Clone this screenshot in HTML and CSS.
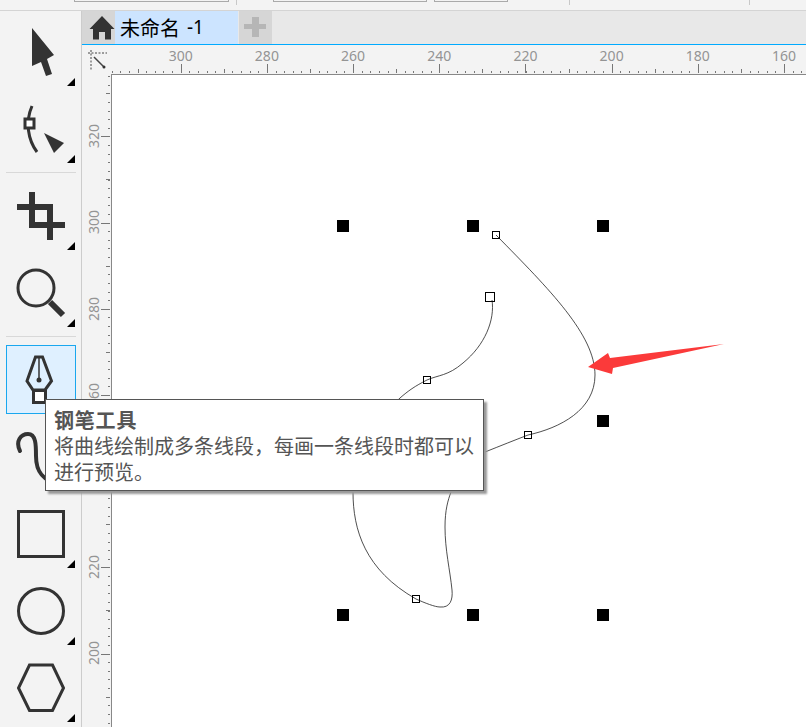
FILE: index.html
```html
<!DOCTYPE html>
<html lang="zh">
<head>
<meta charset="utf-8">
<title>未命名 -1</title>
<link rel="stylesheet" href="styles.css">
</head>
<body>
<div class="app">
  <div class="topbar">
    <span class="field f1"></span>
    <span class="sep s1"></span>
    <span class="field f2"></span>
    <span class="field f3"></span>
    <span class="sep s2"></span>
    <span class="sep s3"></span>
  </div>
  <div class="body">
    <div class="toolbox">
      <div class="tool more">
        <svg viewBox="6 16 70 70"><path class="fill" d="M32 28 54 55 47 59 52 74 46 76 41 62 32 66Z"/></svg>
      </div>
      <div class="tool more">
        <svg viewBox="6 93 70 70"><path class="line" d="M32 106C25 122 28 140 37 152"/><rect class="line whitefill" x="25" y="119" width="9" height="9"/><path class="fill" d="M44 133 64 143 54 153Z"/></svg>
      </div>
      <div class="rule"></div>
      <div class="tool more">
        <svg viewBox="6 180 70 70"><path class="line thick" d="M32 192V225H65M17 207H50V240"/></svg>
      </div>
      <div class="tool more">
        <svg viewBox="6 257 70 70"><circle class="line" cx="36" cy="288" r="18"/><path class="line thick" d="M50 302 63 315"/></svg>
      </div>
      <div class="rule"></div>
      <div class="tool active">
        <svg viewBox="6 345 70 69"><path class="line" d="M35.500 357H42.500L51.500 381 45 390H33L27 381Z"/><path class="line thin" d="M39 357V380"/><circle class="fill" cx="39" cy="380" r="2.500"/><rect class="line whitefill" x="33.500" y="390.500" width="12" height="12"/></svg>
      </div>
      <div class="tool">
        <svg viewBox="6 421 70 70"><path class="line curve" d="M20 451C15 441 21 434 28 434 36 434 36 445 36 456 36 471 42 481 60 484"/></svg>
      </div>
      <div class="tool more">
        <svg viewBox="6 498 70 70"><rect class="line" x="18.500" y="511.500" width="45" height="45"/></svg>
      </div>
      <div class="tool more">
        <svg viewBox="6 575 70 70"><circle class="line" cx="41" cy="611" r="22.500"/></svg>
      </div>
      <div class="tool more">
        <svg viewBox="6 652 70 70"><path class="line" d="M29.500 665H52.500L63.500 688 52.500 710.500H29.500L18.500 688Z"/></svg>
      </div>
    </div>
    <div class="workspace">
      <div class="tabs">
        <div class="tab-home">
          <svg viewBox="82 11 33 33"><path class="fill" d="M102 16 114.500 29H111V39.500H105V32H99V39.500H93V29H89.500Z"/></svg>
        </div>
        <div class="tab-doc"><span class="tab-name">未命名</span><span class="tab-num">-1</span></div>
        <div class="tab-add">
          <svg viewBox="239 11 33 33"><path class="plus" d="M244 24H252V17H259V24H266V29H259V37H252V29H244Z"/></svg>
        </div>
      </div>
      <div class="ruler-row">
        <div class="corner">
          <svg viewBox="82 45 29 29"><path class="dash" d="M88 53H107M91 50V70"/><path class="arrow" d="M94 57 104 67"/><circle class="fill" cx="104" cy="67" r="1.500"/></svg>
        </div>
        <div class="ruler-h">
          <span class="hcell">300</span><span class="hcell">280</span><span class="hcell">260</span><span class="hcell">240</span><span class="hcell">220</span><span class="hcell">200</span><span class="hcell">180</span><span class="hcell">160</span>
        </div>
      </div>
      <div class="stage">
        <div class="ruler-v">
          <span class="vcell"><span>320</span></span><span class="vcell"><span>300</span></span><span class="vcell"><span>280</span></span><span class="vcell"><span>260</span></span><span class="vcell"><span>240</span></span><span class="vcell"><span>220</span></span><span class="vcell"><span>200</span></span>
        </div>
        <div class="canvas">
          <svg viewBox="112 75 694 652">
            <path class="curve-line" d="M492 300C495 320 485 345 463 363 448 376 438 375 427 380 415 386 408 391 400 398 370 425 353 460 353 492 353 530 365 570 416 599 425 603 435 607 440 607 450 608 453 600 452 590 450 570 445 550 445 527 445 510 448 500 451 492 455 470 470 458 485 452 500 446 515 440 528 435 560 428 595 410 595 375 595 335 550 290 496 235"/>
            <g class="nodes">
              <rect x="337" y="220" width="12" height="12"/><rect x="467" y="220" width="12" height="12"/><rect x="597" y="220" width="12" height="12"/>
              <rect x="597" y="415" width="12" height="12"/>
              <rect x="337" y="609" width="12" height="12"/><rect x="467" y="609" width="12" height="12"/><rect x="597" y="609" width="12" height="12"/>
            </g>
            <g class="handles">
              <rect x="492.500" y="231.500" width="7" height="7"/>
              <rect x="485.500" y="292.500" width="9" height="9"/>
              <rect x="423.500" y="376.500" width="7" height="7"/>
              <rect x="524.500" y="431.500" width="7" height="7"/>
              <rect x="412.500" y="595.500" width="7" height="7"/>
            </g>
            <path class="red" d="M588 367 608 353 610 358 724 344 613 368 612 374Z"/>
          </svg>
        </div>
      </div>
    </div>
  </div>
  <div class="tooltip">
    <div class="tip-title">钢笔工具</div>
    <div class="tip-text">将曲线绘制成多条线段，每画一条线段时都可以进行预览。</div>
  </div>
</div>
</body>
</html>
```
FILE: styles.css
```css
* { box-sizing: border-box; }
html, body { margin: 0; padding: 0; background: #fff; }
svg { display: block; width: 100%; height: 100%; }

.app {
  position: relative;
  width: 806px;
  height: 727px;
  overflow: hidden;
  display: flex;
  flex-direction: column;
  background: #f3f3f3;
  font-family: "Noto Sans", "Noto Sans CJK SC", sans-serif;
}

/* top strip */
.topbar {
  flex: none;
  height: 11px;
  display: flex;
  align-items: flex-start;
  background: #f3f3f3;
  border-bottom: 1px solid #d4d4d4;
}
.field { height: 2px; border: 1px solid #aaa; border-top: 0; }
.f1 { width: 155px; margin-left: 74px; }
.f2 { width: 154px; margin-left: 36px; }
.f3 { width: 74px; margin-left: 7px; }
.sep { width: 1px; height: 5px; background: #c8c8c8; }
.s1 { margin-left: 7px; }
.s2 { margin-left: 61px; }
.s3 { margin-left: 179px; }

.body { flex: 1; display: flex; min-height: 0; }

/* toolbox */
.toolbox {
  flex: none;
  width: 82px;
  padding: 5px 5px 0 6px;
  display: flex;
  flex-direction: column;
  gap: 7px;
  background: #f3f3f3;
  border-right: 1px solid #ccc;
}
.tool { position: relative; flex: none; width: 70px; height: 70px; }
.tool.active { height: 69px; background: #dff0ff; border: 1px solid #1aa7ee; }
.tool.active svg { margin: -1px; width: 70px; height: 69px; }
.tool.more::after {
  content: "";
  position: absolute;
  right: 1px;
  bottom: 0;
  width: 8px;
  height: 8px;
  background: #000;
  clip-path: polygon(100% 0, 100% 100%, 0 100%);
}
.rule { flex: none; height: 1px; margin-top: 2px; background: #d8d8d8; }
.rule + .tool.active { margin-top: 1px; }

.fill { fill: #333; }
.line { fill: none; stroke: #333; stroke-width: 3; }
.line.thick { stroke-width: 6; }
.line.thin { stroke-width: 1.500; }
.line.curve { stroke-width: 4; stroke-linecap: round; }
.line.whitefill { fill: #fff; }

/* tabs */
.workspace { flex: 1; min-width: 0; display: flex; flex-direction: column; }
.tabs {
  flex: none;
  height: 34px;
  display: flex;
  background: #e8e8e8;
  border-bottom: 1px solid #00aaff;
}
.tab-home { flex: none; width: 33px; background: #d6d6d6; }
.tab-doc {
  flex: none;
  width: 123px;
  padding-left: 5px;
  display: flex;
  align-items: center;
  gap: 7px;
  background: #cce4ff;
  color: #000;
  font-size: 20px;
}
.tab-name { font-family: "Noto Sans CJK SC", sans-serif; line-height: 33px; }
.tab-num { font-size: 19px; line-height: 33px; }
.tab-add { flex: none; width: 33px; margin-left: 1px; background: #d6d6d6; }
.plus { fill: #b6b6b6; }

/* rulers */
.ruler-row { flex: none; height: 29px; display: flex; }
.corner { flex: none; width: 29px; height: 29px; }
.dash { fill: none; stroke: #444; stroke-width: 1; stroke-dasharray: 2 1.500; }
.arrow { fill: none; stroke: #444; stroke-width: 1.500; }

.ruler-h {
  flex: 1;
  min-width: 0;
  padding-left: 26.600px;
  display: flex;
  overflow: hidden;
  color: #949494;
  font-size: 14px;
  background-image:
    repeating-linear-gradient(90deg, #777 0 1px, transparent 1px 86.200px),
    repeating-linear-gradient(90deg, #777 0 1px, transparent 1px 86.200px),
    repeating-linear-gradient(90deg, #777 0 1px, transparent 1px 8.620px);
  background-repeat: no-repeat;
  background-size: 1200px 9px, 1200px 4px, 1200px 2px;
  background-position: -16.500px calc(100% - 1px), -59.600px calc(100% - 1px), -7.880px calc(100% - 1px);
}
.hcell {
  flex: none;
  width: 86.200px;
  text-align: center;
  line-height: 20px;
  padding-top: 1px;
}

.stage { flex: 1; min-height: 0; display: flex; }
.ruler-v {
  flex: none;
  width: 29px;
  padding-top: 19.200px;
  display: flex;
  flex-direction: column;
  overflow: hidden;
  color: #949494;
  font-size: 14px;
  background-image:
    repeating-linear-gradient(180deg, #777 0 1px, transparent 1px 86.200px),
    repeating-linear-gradient(180deg, #777 0 1px, transparent 1px 86.200px),
    repeating-linear-gradient(180deg, #777 0 1px, transparent 1px 8.620px);
  background-repeat: no-repeat;
  background-size: 9px 1000px, 4px 1000px, 2px 1000px;
  background-position: calc(100% - 1px) -23.900px, calc(100% - 1px) -67px, calc(100% - 1px) -6.560px;
}
.vcell {
  flex: none;
  height: 86.200px;
  display: flex;
  align-items: center;
  padding-left: 2px;
}
.vcell span { writing-mode: vertical-rl; transform: rotate(180deg); line-height: 20px; }

.canvas {
  flex: 1;
  min-width: 0;
  background: #fff;
  border-top: 1px solid #888;
  border-left: 1px solid #888;
}
.curve-line { fill: none; stroke: #222; stroke-width: .8; }
.nodes rect { fill: #000; }
.handles rect { fill: none; stroke: #000; stroke-width: 1; }
.red { fill: #fb3a3a; }

/* tooltip */
.tooltip {
  position: absolute;
  left: 45px;
  top: 399px;
  width: 439px;
  height: 92px;
  padding: 7px 8px 0 8px;
  background: #fff;
  border: 1px solid #555;
  box-shadow: 3px 3px 2px #999;
  color: #555;
  font-family: "Noto Sans CJK SC", sans-serif;
  font-size: 20px;
  line-height: 26px;
}
.tip-title { font-weight: 700; letter-spacing: .8px; }
```
